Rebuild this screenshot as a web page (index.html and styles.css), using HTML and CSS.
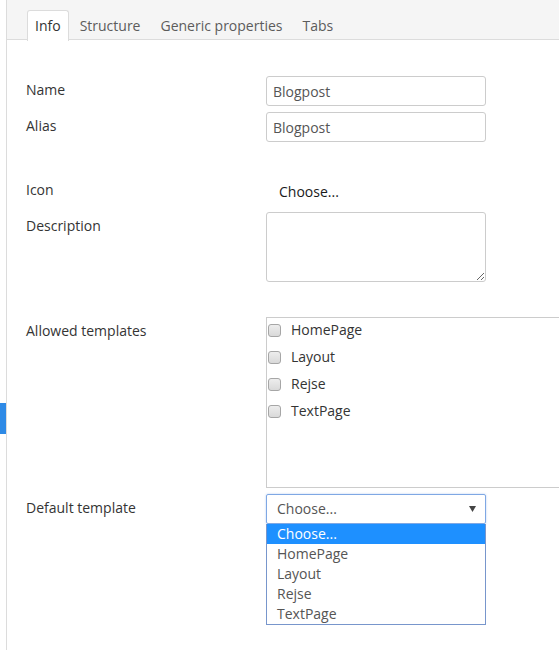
FILE: index.html
```html
<!DOCTYPE html>
<html lang="en">
<head>
    <meta charset="UTF-8">
    <title>Document type - Info</title>
    <link rel="stylesheet" href="styles.css">
</head>
<body>

<div class="rail">
    <div class="rail-marker"></div>
</div>

<div class="editor">
    <div class="tab-bar">
        <ul class="tabs">
            <li class="tab active">Info</li>
            <li class="tab">Structure</li>
            <li class="tab">Generic properties</li>
            <li class="tab">Tabs</li>
        </ul>
    </div>

    <div class="form">
        <div class="row">
            <label class="field-label">Name</label>
            <input class="text-input" type="text" value="Blogpost">
        </div>
        <div class="row">
            <label class="field-label">Alias</label>
            <input class="text-input" type="text" value="Blogpost">
        </div>

        <div class="row section">
            <label class="field-label">Icon</label>
            <div class="icon-picker">Choose...</div>
        </div>
        <div class="row">
            <label class="field-label">Description</label>
            <textarea class="text-area"></textarea>
        </div>

        <div class="row section section-wide">
            <label class="field-label">Allowed templates</label>
            <div class="check-list">
                <label class="check-item"><input type="checkbox">HomePage</label>
                <label class="check-item"><input type="checkbox">Layout</label>
                <label class="check-item"><input type="checkbox">Rejse</label>
                <label class="check-item"><input type="checkbox">TextPage</label>
            </div>
        </div>
        <div class="row">
            <label class="field-label">Default template</label>
            <div class="dropdown">
                <div class="select">
                    <span>Choose...</span>
                    <svg class="caret" width="7" height="6" viewBox="0 0 7 6"><path d="M0 0 H7 L3.5 6 Z" fill="#444"/></svg>
                </div>
                <ul class="options">
                    <li class="option selected">Choose...</li>
                    <li class="option">HomePage</li>
                    <li class="option">Layout</li>
                    <li class="option">Rejse</li>
                    <li class="option">TextPage</li>
                </ul>
            </div>
        </div>
    </div>
</div>

</body>
</html>
```

FILE: styles.css
```css
html, body {
    margin: 0;
    height: 100%;
    overflow: hidden;
}
body {
    font-family: 'Open Sans', 'Noto Sans', sans-serif;
    font-size: 14px;
    line-height: 20px;
    color: #343434;
    background: #fff;
    display: flex;
    min-height: 100vh;
}
.rail {
    width: 6px;
    flex: none;
    border-right: 1px solid #dcdcdc;
    background: #fff;
}
.rail-marker {
    margin-top: 403px;
    height: 31px;
    background-color: #2e8ae6;
}
.editor {
    flex: 1;
    min-width: 0;
    overflow: hidden;
}
.tab-bar {
    background-color: #f5f5f5;
    border-bottom: 1px solid #dcdcdc;
    height: 40px;
    padding-left: 20px;
    box-sizing: border-box;
    padding-top: 10px;
}
.tabs {
    list-style: none;
    margin: 0;
    padding: 0;
    display: flex;
}
.tab {
    height: 30px;
    line-height: 30px;
    padding: 0 8px;
    margin-right: 2px;
    color: #5c5c5c;
    border: 1px solid transparent;
    border-bottom: none;
    box-sizing: border-box;
}
.tab.active {
    background: #fff;
    color: #333;
    border-color: #dcdcdc;
    border-radius: 3px 3px 0 0;
    height: 31px;
    padding: 0 7px;
}
.form {
    padding: 36px 0 0 19px;
}
.row {
    display: grid;
    grid-template-columns: 240px auto;
    align-items: start;
    margin-bottom: 6px;
}
.row.section {
    margin-top: 34px;
}
.row.section-wide {
    margin-top: 35px;
}
.field-label {
    padding-top: 4px;
    color: #343434;
}
.text-input {
    width: 220px;
    height: 30px;
    box-sizing: border-box;
    border: 1px solid #ccc;
    border-radius: 3px;
    padding: 0 6px;
    font: inherit;
    color: #555;
    margin: 0;
}
.icon-picker {
    height: 30px;
    line-height: 31px;
    padding-left: 13px;
    color: #1a1a1a;
}
.text-area {
    width: 220px;
    height: 70px;
    box-sizing: border-box;
    border: 1px solid #ccc;
    border-radius: 3px;
    padding: 4px 6px;
    font: inherit;
    margin: 0;
    display: block;
}
.check-list {
    width: 320px;
    height: 171px;
    box-sizing: border-box;
    border: 1px solid #ccc;
    padding: 2px 0 0 0;
}
.check-item {
    display: flex;
    align-items: center;
    height: 20px;
    margin-bottom: 7px;
    color: #343434;
}
.check-item input {
    -webkit-appearance: none;
    appearance: none;
    width: 13px;
    height: 13px;
    margin: 0 10px 0 1px;
    border: 1px solid #a6a6a6;
    border-radius: 3px;
    background: linear-gradient(#ededed, #d9d9d9);
}
.dropdown {
    width: 220px;
}
.select {
    height: 30px;
    box-sizing: border-box;
    border: 1px solid #7fa8e4;
    border-radius: 2px;
    box-shadow: 0 0 2px rgba(102, 150, 230, 0.5);
    padding: 0 9px 0 10px;
    display: flex;
    align-items: center;
    justify-content: space-between;
    color: #555;
}
.options {
    list-style: none;
    margin: 0;
    padding: 0;
    border: 1px solid #7896cc;
    border-top: none;
}
.option {
    height: 20px;
    line-height: 20px;
    padding-left: 10px;
    color: #555;
}
.option.selected {
    background-color: #1e90ff;
    color: #fff;
}
```
